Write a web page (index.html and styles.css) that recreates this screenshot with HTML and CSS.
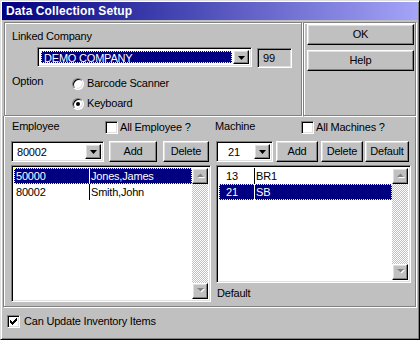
FILE: index.html
```html
<!DOCTYPE html>
<html>
<head>
<meta charset="utf-8">
<link rel="stylesheet" href="styles.css">
</head>
<body>
<div class="window">
  <div class="titlebar">Data Collection Setup</div>
  <div class="body">
    <div class="top">
      <div class="etched top-left">
        <div class="label linked">Linked Company</div>
        <div class="company-row">
          <div class="field combo company-combo">
            <div class="combo-field"><span class="sel-text">DEMO COMPANY</span></div>
            <div class="raised drop-btn"><svg width="7" height="4" viewBox="0 0 7 4"><path d="M0 0h7L3.5 4z" fill="#000"/></svg></div>
          </div>
          <div class="field readonly">99</div>
        </div>
        <div class="option-row">
          <div class="option-label">Option</div>
          <div class="radios">
            <div class="radio"><span class="radio-dot"></span>Barcode Scanner</div>
            <div class="radio"><span class="radio-dot checked"></span>Keyboard</div>
          </div>
        </div>
      </div>
      <div class="etched top-right">
        <div class="raised btn btn-wide ok">OK</div>
        <div class="raised btn btn-wide help">Help</div>
      </div>
    </div>

    <div class="bottom">
      <div class="group emp">
        <div class="group-head">
          <div class="group-label emp-label">Employee</div>
          <div class="check-row"><span class="field checkbox"></span>All Employee ?</div>
        </div>
        <div class="ctrl-row">
          <div class="field combo emp-combo">
            <div class="combo-field value emp-val">80002</div>
            <div class="raised drop-btn"><svg width="7" height="4" viewBox="0 0 7 4"><path d="M0 0h7L3.5 4z" fill="#000"/></svg></div>
          </div>
          <div class="raised btn emp-add">Add</div>
          <div class="raised btn emp-del">Delete</div>
        </div>
        <div class="field list emp-list">
          <div class="rows">
            <div class="row selected"><span class="c1 e1">50000</span><span class="c2">Jones,James</span></div>
            <div class="row"><span class="c1 e1">80002</span><span class="c2">Smith,John</span></div>
          </div>
          <div class="scrollbar">
            <div class="raised sb-btn"><svg width="9" height="6" viewBox="0 0 9 6"><path d="M2 5h7L5.5 1.5z" fill="#fff"/><path d="M1 4h7L4.5 0.5z" fill="#808080"/></svg></div>
            <div class="sb-track"></div>
            <div class="raised sb-btn"><svg width="9" height="6" viewBox="0 0 9 6"><path d="M2 1h7L5.5 4.5z" fill="#fff"/><path d="M1 0h7L4.5 3.5z" fill="#808080"/></svg></div>
          </div>
        </div>
      </div>

      <div class="group mach">
        <div class="group-head">
          <div class="group-label mach-label">Machine</div>
          <div class="check-row"><span class="field checkbox"></span>All Machines ?</div>
        </div>
        <div class="ctrl-row">
          <div class="field combo mach-combo">
            <div class="combo-field value mach-val">21</div>
            <div class="raised drop-btn"><svg width="7" height="4" viewBox="0 0 7 4"><path d="M0 0h7L3.5 4z" fill="#000"/></svg></div>
          </div>
          <div class="raised btn mach-add">Add</div>
          <div class="raised btn mach-del">Delete</div>
          <div class="raised btn mach-def">Default</div>
        </div>
        <div class="field list mach-list">
          <div class="rows">
            <div class="row"><span class="c1 m1">13</span><span class="c2">BR1</span></div>
            <div class="row selected"><span class="c1 m1">21</span><span class="c2">SB</span></div>
          </div>
          <div class="scrollbar">
            <div class="raised sb-btn"><svg width="9" height="6" viewBox="0 0 9 6"><path d="M2 5h7L5.5 1.5z" fill="#fff"/><path d="M1 4h7L4.5 0.5z" fill="#808080"/></svg></div>
            <div class="sb-track"></div>
            <div class="raised sb-btn"><svg width="9" height="6" viewBox="0 0 9 6"><path d="M2 1h7L5.5 4.5z" fill="#fff"/><path d="M1 0h7L4.5 3.5z" fill="#808080"/></svg></div>
          </div>
        </div>
        <div class="default-label">Default</div>
      </div>
    </div>

    <div class="footer">
      <span class="field checkbox checked"><svg width="9" height="9" viewBox="0 0 9 9"><path d="M1 3h1v1h1v1h1V4h1V3h1V2h1V1h1v3H7v1H6v1H5v1H4v1H3V7H2V6H1z" fill="#000"/></svg></span>
      <span>Can Update Inventory Items</span>
    </div>
  </div>
</div>
</body>
</html>
```

FILE: styles.css
```css
* { box-sizing: border-box; margin: 0; padding: 0; }
html, body { width: 420px; height: 340px; overflow: hidden; background: #c0c0c0; }
body {
  font-family: "Liberation Sans", Arial, sans-serif;
  font-size: 11px;
  line-height: 13px;
  color: #000;
  letter-spacing: -0.2px;
}
.window {
  width: 420px;
  height: 340px;
  border: 1px solid;
  border-color: #dfdfdf #000 #000 #dfdfdf;
  box-shadow: inset 1px 1px #fff, inset -1px -1px #808080;
  padding: 1px;
  background: #c0c0c0;
}
.titlebar {
  height: 18px;
  background: linear-gradient(to right, #000080, #a4a4f8);
  color: #fff;
  font-weight: bold;
  font-size: 12px;
  line-height: 18px;
  padding-left: 4px;
  letter-spacing: 0.1px;
}
.body { padding: 2px 2px 0 2px; }

.etched {
  border: 1px solid #808080;
  box-shadow: 1px 1px 0 #fff, inset 1px 1px 0 #fff;
}
.raised {
  background: #c0c0c0;
  border: 1px solid;
  border-color: #fff #000 #000 #fff;
  box-shadow: inset -1px -1px #808080, inset 1px 1px #dfdfdf;
}
.field {
  background: #fff;
  border: 1px solid;
  border-color: #808080 #fff #fff #808080;
  box-shadow: inset 1px 1px #000, inset -1px -1px #dfdfdf;
}

/* top */
.top { display: flex; gap: 1px; height: 94px; }
.top-left { width: 298px; }
.top-right { width: 113px; }
.linked { padding: 7px 0 0 7px; }
.company-row { display: flex; align-items: flex-start; margin: 4px 0 0 32px; }
.combo { display: flex; padding: 2px; height: 21px; }
.company-combo { width: 215px; height: 20px; }
.combo-field { flex: 1; display: flex; }
.company-combo .combo-field { padding: 1px; }
.sel-text {
  flex: 1;
  background: #000080;
  color: #fff;
  outline: 1px dotted #ffff80;
  outline-offset: -1px;
  padding-left: 3px;
  line-height: 15px;
}
.drop-btn {
  width: 16px;
  display: flex;
  align-items: center;
  justify-content: center;
}
.drop-btn svg { display: block; margin-top: 1px; }
.readonly {
  width: 35px;
  height: 20px;
  margin: 1px 0 0 5px;
  background: #c0c0c0;
  padding-left: 5px;
  line-height: 18px;
}
.option-row { display: flex; margin-top: 7px; padding-left: 7px; }
.option-label { width: 60px; }
.radios { display: flex; flex-direction: column; gap: 7px; margin-top: 2px; }
.radio { display: flex; align-items: center; gap: 3px; height: 13px; }
.radio-dot {
  position: relative;
  width: 12px;
  height: 12px;
  border-radius: 50%;
  background: #fff;
  border: 1px solid;
  border-color: #808080 #fff #fff #808080;
  box-shadow: inset 1px 1px #000, inset -1px -1px #dfdfdf;
}
.radio-dot.checked::after {
  content: "";
  position: absolute;
  left: 3px;
  top: 3px;
  width: 4px;
  height: 4px;
  border-radius: 50%;
  background: #000;
}

.btn {
  display: flex;
  align-items: center;
  justify-content: center;
  height: 21px;
}
.btn-wide { width: 107px; margin-left: 3px; }
.ok { margin-top: 1px; }
.help { margin-top: 5px; }

/* bottom */
.bottom {
  display: flex;
  height: 191px;
  margin-left: -1px;
  border: 1px solid #808080;
  border-top: none;
  box-shadow: 1px 1px 0 #fff, inset 1px 0 0 #fff;
}
.group { display: flex; flex-direction: column; }
.emp { width: 208px; }
.mach { flex: 1; }
.group-head { display: flex; height: 25px; }
.group-label { margin-top: 4px; }
.emp-label { width: 101px; padding-left: 8px; }
.mach-label { width: 89px; padding-left: 3px; }
.check-row { display: flex; align-items: center; gap: 2px; height: 13px; margin-top: 5px; }
.checkbox { width: 13px; height: 13px; display: flex; align-items: center; justify-content: center; }
.checkbox svg { display: block; }

.ctrl-row { display: flex; height: 21px; }
.emp .ctrl-row { padding-left: 7px; }
.mach .ctrl-row { padding-left: 4px; }
.value { line-height: 17px; }
.emp-combo { width: 93px; }
.emp-val { padding-left: 3px; }
.mach-combo { width: 57px; }
.mach-val { padding-left: 9px; }
.emp-add { width: 48px; margin-left: 5px; }
.emp-del { width: 46px; margin-left: 6px; }
.mach-add { width: 42px; margin-left: 3px; }
.mach-del { width: 42px; margin-left: 3px; }
.mach-def { width: 44px; margin-left: 2px; }

.list { display: flex; padding: 2px; margin-top: 3px; }
.emp-list { width: 200px; height: 137px; margin-left: 7px; }
.mach-list { width: 195px; height: 118px; margin-left: 4px; }
.rows { flex: 1; }
.row { display: flex; height: 16px; line-height: 16px; position: relative; }
.row.selected { background: #000080; color: #fff; }
.row.selected::after {
  content: "";
  position: absolute;
  inset: 0;
  border: 1px dotted #ffff80;
}
.c1 { display: block; }
.e1 { width: 75px; padding-left: 2px; }
.m1 { width: 35px; padding-left: 7px; }
.c2 { border-left: 1px solid currentColor; padding-left: 1px; }
.scrollbar { width: 16px; display: flex; flex-direction: column; }
.sb-btn { width: 16px; height: 16px; display: flex; align-items: center; justify-content: center; }
.sb-btn svg { display: block; }
.sb-track {
  flex: 1;
  background-color: #fff;
  background-image: repeating-conic-gradient(#c0c0c0 0 25%, #fff 0 50%);
  background-size: 2px 2px;
}
.default-label { padding-left: 5px; margin-top: 4px; }

.footer { display: flex; align-items: center; gap: 4px; margin-top: 8px; padding-left: 3px; height: 13px; }
```
